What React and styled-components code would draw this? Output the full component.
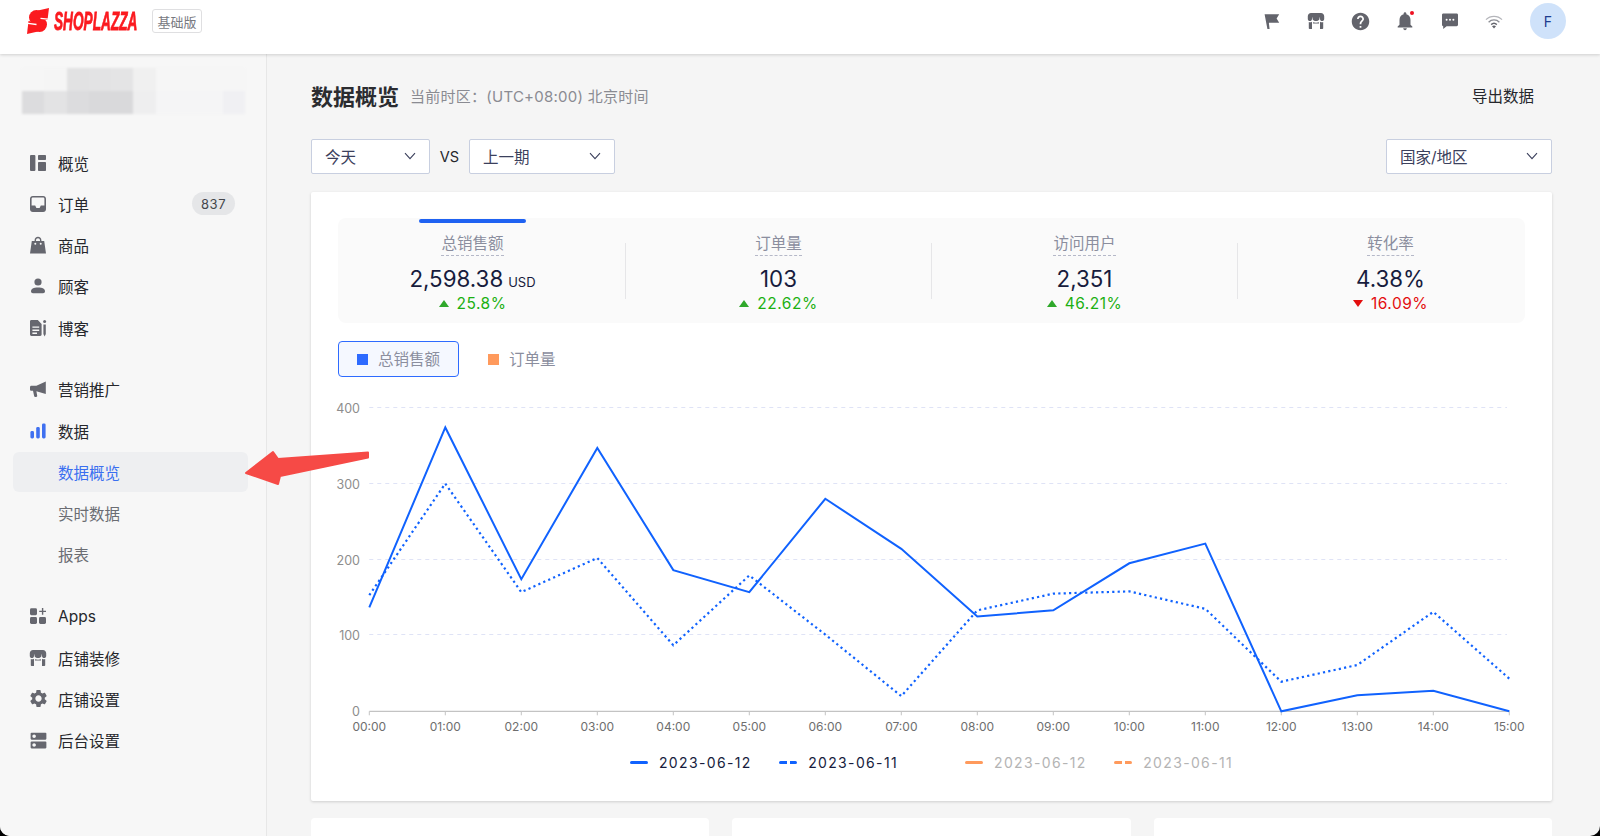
import React from 'react'
import styled, { createGlobalStyle } from 'styled-components'
import { MdSettings, MdHelp, MdNotifications, MdDns } from 'react-icons/md'

const GlobalStyle = createGlobalStyle`
  html, body {
    margin: 0;
    padding: 0;
    background: #000;
    overflow: hidden;
  }
  body, button {
    font-family: Inter, "Noto Sans CJK SC", sans-serif;
  }
  * { box-sizing: border-box; }
`
const Shell = styled.div`
  position: relative;
  width: 1600px;
  height: 836px;
  display: flex;
  flex-direction: column;
  background: #f5f5f5;
  border-radius: 0 0 10px 10px;
  overflow: hidden;
`
const Header = styled.header`
  height: 54px;
  flex: none;
  display: flex;
  align-items: center;
  padding: 0 34px 12px 27px;
  background: #fff;
  box-shadow: 0 1px 3px rgba(0, 0, 0, 0.16);
  position: relative;
  z-index: 2;
`
const Brand = styled.div`
  display: flex;
  align-items: center;
`
const BrandName = styled.span`
  display: block;
  width: 84px;
  margin-left: 5px;
  font-family: "Liberation Sans", sans-serif;
  font-size: 26px;
  line-height: 26px;
  font-weight: 700;
  font-style: italic;
  color: #fb1a1f;
  white-space: nowrap;
  -webkit-text-stroke: 0.8px #fb1a1f;
  transform: scaleX(0.525);
  transform-origin: left center;
`
const PlanTag = styled.span`
  width: 50px;
  height: 24px;
  margin-left: 14px;
  display: flex;
  align-items: center;
  justify-content: center;
  border: 1px solid #dfdfe1;
  border-radius: 3px;
  font-size: 13px;
  color: #77797f;
`
const HeaderTools = styled.div`
  margin-left: auto;
  display: flex;
  align-items: center;
  gap: 26.4px;
`
const ToolIcon = styled.span`
  position: relative;
  width: 18px;
  height: 18px;
  display: flex;
  color: #63646c;
`
const RedDot = styled.i`
  position: absolute;
  top: -1px;
  right: 0;
  width: 4px;
  height: 4px;
  border-radius: 50%;
  background: #ee1122;
`
const Avatar = styled.span`
  width: 36px;
  height: 36px;
  margin-left: 0.6px;
  display: flex;
  align-items: center;
  justify-content: center;
  border-radius: 50%;
  background: #cfe2fa;
  color: #1d3c8f;
  font-size: 14px;
`
const Body = styled.div`
  flex: 1;
  min-height: 0;
  display: flex;
`
const Sidebar = styled.aside`
  width: 267px;
  flex: none;
  padding-top: 14px;
  background: #f7f7f7;
  border-right: 1px solid #e7e7e7;
`
const Mosaic = styled.div`
  margin: 0 0 28px 22px;
  width: 223px;
  height: 46px;
  display: grid;
  grid-template-columns: repeat(10, 1fr);
  grid-template-rows: repeat(2, 1fr);
  filter: blur(1px);
`
const MosaicCell = styled.div`
  background: ${p => p.$c};
`
const NavGroup = styled.nav`
  display: flex;
  flex-direction: column;
  margin-bottom: 20.6px;
`
const NavItem = styled.div`
  height: 41.25px;
  display: flex;
  align-items: center;
  padding-left: 29px;
  font-size: 15.5px;
  color: #26272c;
`
const NavIcon = styled.span`
  width: 18px;
  height: 18px;
  margin-right: 11px;
  display: flex;
  color: ${p => (p.$active ? '#3f70f0' : '#66676f')};
`
const Count = styled.span`
  width: 43px;
  height: 23px;
  margin-left: auto;
  margin-right: 31px;
  display: flex;
  align-items: center;
  justify-content: center;
  border-radius: 12px;
  background: #e5e6e8;
  font-size: 13px;
  letter-spacing: 0.6px;
  color: #44464c;
`
const SubItem = styled.div`
  height: 39.25px;
  margin: 1px 18px 1px 13px;
  padding-left: 45px;
  display: flex;
  align-items: center;
  border-radius: 6px;
  font-size: 15.5px;
  color: ${p => (p.$active ? '#3a6ff0' : '#6b6d73')};
  background: ${p => (p.$active ? '#eeeff1' : 'transparent')};
`
const Main = styled.main`
  flex: 1;
  min-width: 0;
  padding: 21px 48px 0 44px;
`
const TitleRow = styled.div`
  height: 40px;
  display: flex;
  align-items: center;
`
const Title = styled.h1`
  margin: 0;
  font-size: 22px;
  font-weight: 700;
  color: #2b2c30;
`
const TimeZone = styled.span`
  margin-left: 11px;
  font-size: 15px;
  letter-spacing: 0.25px;
  color: #8a8b92;
`
const ExportLink = styled.a`
  margin-left: auto;
  margin-right: 18px;
  font-size: 15.5px;
  color: #26272c;
`
const Controls = styled.div`
  margin-top: 24px;
  display: flex;
  align-items: center;
`
const Select = styled.div`
  width: ${p => p.$w}px;
  height: 35px;
  padding: 0 13px 2px;
  display: flex;
  align-items: center;
  justify-content: space-between;
  background: #fff;
  border: 1px solid #c8cfe0;
  border-radius: 2px;
  font-size: 15.5px;
  color: #3b405c;
  margin-left: ${p => (p.$right ? 'auto' : '0')};
`
const Versus = styled.span`
  width: 39px;
  text-align: center;
  font-size: 14.5px;
  color: #26272c;
`
const Panel = styled.section`
  margin-top: 18px;
  height: 609px;
  padding: 26px 27px 0;
  background: #fff;
  border-radius: 2px;
  box-shadow: 0 1px 3px rgba(0, 0, 0, 0.16);
`
const Metrics = styled.div`
  height: 105px;
  background: #fafafa;
  border-radius: 8px;
`
const MetricGrid = styled.div`
  margin: 0 -18.5px;
  display: grid;
  grid-template-columns: repeat(4, 1fr);
`
const Metric = styled.div`
  position: relative;
  height: 105px;
  padding-top: 15px;
  text-align: center;

  &:not(:last-child)::after {
    content: '';
    position: absolute;
    right: 0;
    top: 25px;
    height: 56px;
    width: 1px;
    background: #e6e6e8;
  }
`
const ActiveBar = styled.i`
  position: absolute;
  top: 1px;
  left: 50%;
  width: 107px;
  height: 4px;
  margin-left: -54px;
  border-radius: 3px;
  background: #1f62f2;
`
const MetricLabel = styled.span`
  display: inline-block;
  height: 22px;
  line-height: 20px;
  font-size: 15.5px;
  color: #8b8e9e;
  border-bottom: 1px dashed #b5b8c8;
`
const MetricValue = styled.div`
  margin-top: 9px;
  height: 28px;
  line-height: 28px;
  font-size: 22.3px;
  color: #171c3d;
`
const Unit = styled.small`
  margin-left: 5px;
  font-size: 13px;
  color: #171c3d;
`
const Delta = styled.div`
  height: 20px;
  display: flex;
  align-items: center;
  justify-content: center;
  gap: 8px;
  font-size: 15.5px;
  letter-spacing: 0.5px;
  color: ${p => (p.$down ? '#e30d0d' : '#1cb012')};
`
const Arrow = styled.i`
  width: 0;
  height: 0;
  border-left: 5.5px solid transparent;
  border-right: 5.5px solid transparent;
  border-bottom: ${p => (p.$down ? '0' : '7px solid #2fa82a')};
  border-top: ${p => (p.$down ? '7px solid #e30d0d' : '0')};
`
const SeriesToggles = styled.div`
  margin-top: 18px;
  display: flex;
`
const SeriesToggle = styled.div`
  height: 36px;
  width: ${p => (p.$on ? '121px' : '106px')};
  margin-left: ${p => (p.$on ? '0' : '10px')};
  padding: 0 0 3px 18px;
  display: flex;
  align-items: center;
  gap: 10px;
  font-size: 15.5px;
  color: #8b8e9e;
  border-radius: 4px;
  border: 1px solid ${p => (p.$on ? '#2e6bff' : 'transparent')};
  background: ${p => (p.$on ? '#f5f8ff' : 'transparent')};
`
const SeriesDot = styled.i`
  width: 11px;
  height: 11px;
  margin-top: 3px;
  background: ${p => p.$c};
`
const ChartFrame = styled.svg`
  display: block;
  margin: 13px -27px 0;
  width: 1241px;
  height: 360px;
`
const Legend = styled.div`
  height: 24px;
  display: flex;
  justify-content: center;
  gap: 67px;
`
const LegendGroup = styled.div`
  display: flex;
  gap: 27.5px;
`
const LegendItem = styled.div`
  display: flex;
  align-items: center;
  gap: 11px;
  font-size: 14px;
  letter-spacing: 1.35px;
  color: ${p => (p.$off ? '#b4b4b4' : '#171c3d')};
`
const LegendLine = styled.i`
  width: 18px;
  height: 3px;
  border-radius: 2px;
  background: ${p =>
    p.$dashed
      ? `linear-gradient(90deg, ${p.$c} 0 8px, transparent 8px 11px, ${p.$c} 11px 18px)`
      : p.$c};
`
const BottomCards = styled.div`
  margin-top: 17px;
  display: grid;
  grid-template-columns: repeat(3, 1fr);
  gap: 23px;
`
const BottomCard = styled.div`
  height: 60px;
  background: #fff;
  border-radius: 4px;
`
const PointerArrow = styled.svg`
  position: absolute;
  left: 240px;
  top: 445px;
  width: 135px;
  height: 46px;
  z-index: 3;
`

const Chevron = () => (
  <svg width="12" height="8" viewBox="0 0 12 8" fill="none" stroke="#3b405c" strokeWidth="1.1">
    <path d="M1 1.2l5 5.4 5-5.4" />
  </svg>
)

// icons are drawn on an 18px box
const Svg = ({ children }) => (
  <svg width="18" height="18" viewBox="0 0 18 18" fill="currentColor">{children}</svg>
)
const FlagIcon = () => (
  <Svg>
    <path d="M1.6 2.2h14.6l-2.6 4.400 2.600 4.200H6l-.1.400.7 5.800H4.400L1.600 2.200z" />
  </Svg>
)
const StoreIcon = () => (
  <Svg>
    <path d="M4 1h10c1.800 0 3.200 1.400 3.200 3.200v2.800c0 1.200-.9 2.100-2.100 2.100s-2.100-.9-2.100-2.100V5.400h-.5V7c0 1.200-2.200 2.100-3.500 2.100S5.500 8.200 5.500 7V5.400H5V7c0 1.200-.9 2.100-2.100 2.100S.8 8.200.8 7V4.200C.8 2.400 2.200 1 4 1z" />
    <path d="M1.800 10.100c1.100.4 2.300.2 3.200-.4V17H2.600c-.5 0-.8-.4-.8-.8v-6.100zM16.200 10.100v6.100c0 .4-.3.800-.8.800H13V9.700c.9.600 2.100.8 3.200.4zM6 10.200c1.900.6 4.100.6 6 0v1.200H6v-1.200z" />
  </Svg>
)
const ChatIcon = () => (
  <Svg>
    <path d="M2.400 1.400h13.200c.8 0 1.400.6 1.400 1.400v10c0 .8-.6 1.400-1.400 1.400H5.600L2.200 17v-2.800c-.7-.1-1.200-.7-1.200-1.400v-10c0-.8.6-1.400 1.400-1.400z" />
    <circle cx="5.600" cy="7.800" r="1" fill="#fff" />
    <circle cx="9" cy="7.800" r="1" fill="#fff" />
    <circle cx="12.400" cy="7.800" r="1" fill="#fff" />
  </Svg>
)
const WifiIcon = () => (
  <svg width="18" height="18" viewBox="0 0 18 18" fill="none">
    <path d="M1 7.600c4.400-4.400 11.600-4.400 16 0" stroke="#b4b5ba" strokeWidth="1.3" />
    <path d="M3.600 10.200c3-3 7.800-3 10.800 0" stroke="#8c8d94" strokeWidth="1.3" />
    <path d="M6.200 12.600c1.600-1.500 4-1.500 5.600 0" stroke="#63646c" strokeWidth="1.5" />
    <path d="M9 16.400l-2-2.200c1.100-.8 2.900-.8 4 0l-2 2.200z" fill="#63646c" />
  </svg>
)
const OverviewIcon = () => (
  <Svg>
    <rect x="1" y="1" width="5.400" height="16" rx="1" />
    <rect x="9" y="1" width="8" height="5" rx="0.8" />
    <rect x="9" y="8" width="8" height="9" rx="0.8" />
  </Svg>
)
const InboxIcon = () => (
  <Svg>
    <path fillRule="evenodd" d="M3.800 1h10.400C15.800 1 17 2.200 17 3.800v10.400c0 1.600-1.200 2.800-2.800 2.800H3.800C2.200 17 1 15.800 1 14.200V3.800C1 2.200 2.200 1 3.800 1zM3.800 2.600c-.6 0-1.200.6-1.200 1.200v6.800h3.600L7.400 13h3.200l1.200-2.400h3.600V3.800c0-.6-.6-1.200-1.200-1.200H3.800z" />
  </Svg>
)
const BagIcon = () => (
  <Svg>
    <path fillRule="evenodd" d="M5.600 5V4.200C5.600 2.300 7.100.8 9 .8s3.400 1.500 3.400 3.400V5h2.800L17 17.400H1L2.800 5h2.800zm1.400 0h4v-.8c0-1.100-.9-2-2-2s-2 .9-2 2V5zM6.300 8.800a1 1 0 100-2 1 1 0 000 2zm5.400 0a1 1 0 100-2 1 1 0 000 2z" />
  </Svg>
)
const PersonIcon = () => (
  <Svg>
    <circle cx="9" cy="5" r="3.600" />
    <path d="M2 14.200c0-2.400 2.400-3.800 7-3.800s7 1.400 7 3.800c0 1.200-.8 2-2 2H4c-1.200 0-2-.8-2-2z" />
  </Svg>
)
const BlogIcon = () => (
  <Svg>
    <path fillRule="evenodd" d="M2.400 1h6.400L12.600 5v10.600c0 .8-.6 1.400-1.400 1.400H2.400c-.8 0-1.400-.6-1.400-1.400V2.400C1 1.600 1.600 1 2.400 1zM3.400 7.400v1.400h6.800V7.400H3.400zm0 3.200V12h6.800v-1.400H3.400zm0 3v1.400h4.600v-1.400H3.400z" />
    <circle cx="15.600" cy="2.600" r="1.500" />
    <path d="M14.400 5.400h2.400V15l-1.200 2.600L14.400 15V5.400z" />
  </Svg>
)
const MegaphoneIcon = () => (
  <Svg>
    <path d="M16.800 1.400v12.600L7.400 11.200l.8 4.600c.1.700-.3 1.200-1 1.200H6.200c-.5 0-.9-.3-1-.8L4 10.800H2.400c-.8 0-1.400-.6-1.400-1.400V7.200c0-.8.6-1.400 1.400-1.400h5l9.400-4.400z" />
  </Svg>
)
const BarsIcon = () => (
  <Svg>
    <rect x="1.400" y="9" width="3.600" height="7.400" rx="1.400" />
    <rect x="7.200" y="5" width="3.600" height="11.400" rx="1.400" />
    <rect x="13" y="1.400" width="3.600" height="15" rx="1.400" />
  </Svg>
)
const AppsIcon = () => (
  <Svg>
    <rect x="1" y="1.200" width="7" height="7" rx="1.400" />
    <rect x="1" y="10" width="7" height="7" rx="1.400" />
    <rect x="10" y="10" width="7" height="7" rx="1.400" />
    <path d="M12.900 1h1.400v2.700H17v1.400h-2.700v2.700h-1.400V5.100h-2.700V3.700h2.700V1z" />
  </Svg>
)

const mosaic = [
  '#f6f6f6', '#f5f5f5', '#e2e2e3', '#e3e3e4', '#e4e4e5', '#f0f0f0', '#f6f6f6', '#f6f6f6', '#f6f6f6', '#f6f6f6',
  '#dcdcde', '#e3e3e4', '#dcdcde', '#d9d9db', '#d9d9db', '#eeeeef', '#f5f5f6', '#f5f5f6', '#f5f5f6', '#f0f0f3',
]

const metrics = [
  { label: '总销售额', value: '2,598.38', unit: 'USD', delta: '25.8%', active: true },
  { label: '订单量', value: '103', delta: '22.62%' },
  { label: '访问用户', value: '2,351', delta: '46.21%' },
  { label: '转化率', value: '4.38%', delta: '16.09%', down: true },
]

// chart coordinates are relative to the svg, which sits at 311,390 on the page
const X0 = 58.3
const STEP = 76
const BASE = 321.3
const SCALE = 75.9 / 100
const hours = Array.from({ length: 16 }, (_, i) => `${String(i).padStart(2, '0')}:00`)
const current = [137, 374, 174, 347, 186, 157, 280, 214, 125, 133, 195, 221, 0, 21, 27, 0]
const previous = [153, 300, 157, 202, 87, 179, 101, 20, 133, 155, 158, 135, 39, 61, 131, 43]
const toPoints = list => list.map((v, i) => `${X0 + i * STEP},${BASE - v * SCALE}`).join(' ')

const Chart = () => (
  <ChartFrame viewBox="0 0 1241 360">
    {[100, 200, 300, 400].map(v => (
      <line key={v} x1={X0} x2={1196} y1={Math.round(BASE - v * SCALE) - 0.5} y2={Math.round(BASE - v * SCALE) - 0.5}
        stroke="#dfe3f6" strokeDasharray="4 4" />
    ))}
    {[0, 100, 200, 300, 400].map(v => (
      <text key={v} x={49} y={BASE - v * SCALE + 5} textAnchor="end" fontSize="12.5" fill="#8d8d8d">{v}</text>
    ))}
    <line x1={X0} x2={X0 + 15 * STEP} y1={BASE} y2={BASE} stroke="#b4b4b4" />
    {hours.map((h, i) => (
      <g key={h}>
        <line x1={X0 + i * STEP} x2={X0 + i * STEP} y1={BASE} y2={BASE + 4} stroke="#c4c4c4" />
        <text x={X0 + i * STEP} y={BASE + 20} textAnchor="middle" fontSize="12" fill="#6e6e6e">{h}</text>
      </g>
    ))}
    <polyline points={toPoints(previous)} fill="none" stroke="#1062fe" strokeWidth="2.2" strokeDasharray="2.2 3.2" />
    <polyline points={toPoints(current)} fill="none" stroke="#1062fe" strokeWidth="2" />
  </ChartFrame>
)

const NavRow = ({ icon, label, active, count }) => (
  <NavItem>
    <NavIcon $active={active}>{icon}</NavIcon>
    {label}
    {count && <Count>{count}</Count>}
  </NavItem>
)

const App = () => (
  <Shell>
    <GlobalStyle />
    <Header>
      <Brand>
        <svg width="22" height="26" viewBox="0 0 22 26">
          <g fill="#fb1a1f">
            <circle cx="9.500" cy="9.500" r="7.500" />
            <circle cx="12.500" cy="16.500" r="7.500" />
            <polygon points="11,2.500 22,0 20.500,12 15,12" />
            <polygon points="1.500,13 0,26 11,23.500 7,14" />
          </g>
          <path d="M13.500 10.300L21 11.200M1 15.300l8.500 1.200" stroke="#fff" strokeWidth="1.300" fill="none" />
        </svg>
        <BrandName>SHOPLAZZA</BrandName>
        <PlanTag>基础版</PlanTag>
      </Brand>
      <HeaderTools>
        <ToolIcon><FlagIcon /></ToolIcon>
        <ToolIcon><StoreIcon /></ToolIcon>
        <ToolIcon><MdHelp size={21} style={{ margin: '-1.5px' }} /></ToolIcon>
        <ToolIcon><MdNotifications size={22} style={{ margin: '-2px' }} /><RedDot /></ToolIcon>
        <ToolIcon><ChatIcon /></ToolIcon>
        <ToolIcon><WifiIcon /></ToolIcon>
        <Avatar>F</Avatar>
      </HeaderTools>
    </Header>
    <Body>
      <Sidebar>
        <Mosaic>
          {mosaic.map((c, i) => <MosaicCell key={i} $c={c} />)}
        </Mosaic>
        <NavGroup>
          <NavRow icon={<OverviewIcon />} label="概览" />
          <NavRow icon={<InboxIcon />} label="订单" count="837" />
          <NavRow icon={<BagIcon />} label="商品" />
          <NavRow icon={<PersonIcon />} label="顾客" />
          <NavRow icon={<BlogIcon />} label="博客" />
        </NavGroup>
        <NavGroup>
          <NavRow icon={<MegaphoneIcon />} label="营销推广" />
          <NavRow icon={<BarsIcon />} label="数据" active />
          <SubItem $active>数据概览</SubItem>
          <SubItem>实时数据</SubItem>
          <SubItem>报表</SubItem>
        </NavGroup>
        <NavGroup>
          <NavRow icon={<AppsIcon />} label="Apps" />
          <NavRow icon={<StoreIcon />} label="店铺装修" />
          <NavRow icon={<MdSettings size={21} style={{ margin: '-1.5px' }} />} label="店铺设置" />
          <NavRow icon={<MdDns size={21} style={{ margin: '-1.5px' }} />} label="后台设置" />
        </NavGroup>
      </Sidebar>
      <Main>
        <TitleRow>
          <Title>数据概览</Title>
          <TimeZone>当前时区：(UTC+08:00) 北京时间</TimeZone>
          <ExportLink>导出数据</ExportLink>
        </TitleRow>
        <Controls>
          <Select $w={119}>今天<Chevron /></Select>
          <Versus>VS</Versus>
          <Select $w={146}>上一期<Chevron /></Select>
          <Select $w={166} $right>国家/地区<Chevron /></Select>
        </Controls>
        <Panel>
          <Metrics>
            <MetricGrid>
              {metrics.map(m => (
                <Metric key={m.label}>
                  {m.active && <ActiveBar />}
                  <MetricLabel>{m.label}</MetricLabel>
                  <MetricValue>{m.value}{m.unit && <Unit>{m.unit}</Unit>}</MetricValue>
                  <Delta $down={m.down}><Arrow $down={m.down} />{m.delta}</Delta>
                </Metric>
              ))}
            </MetricGrid>
          </Metrics>
          <SeriesToggles>
            <SeriesToggle $on><SeriesDot $c="#2e6bff" />总销售额</SeriesToggle>
            <SeriesToggle><SeriesDot $c="#ff9a5c" />订单量</SeriesToggle>
          </SeriesToggles>
          <Chart />
          <Legend>
            <LegendGroup>
              <LegendItem><LegendLine $c="#1062fe" />2023-06-12</LegendItem>
              <LegendItem><LegendLine $c="#1062fe" $dashed />2023-06-11</LegendItem>
            </LegendGroup>
            <LegendGroup>
              <LegendItem $off><LegendLine $c="#ff9a5c" />2023-06-12</LegendItem>
              <LegendItem $off><LegendLine $c="#ff9a5c" $dashed />2023-06-11</LegendItem>
            </LegendGroup>
          </Legend>
        </Panel>
        <BottomCards>
          <BottomCard />
          <BottomCard />
          <BottomCard />
        </BottomCards>
      </Main>
    </Body>
    <PointerArrow viewBox="0 0 135 46">
      <polygon points="6,28 33,7 38,14 128,7.500 128,12.500 40,31 38,39"
        fill="#f64a46" stroke="#f64a46" strokeWidth="2" strokeLinejoin="round" />
    </PointerArrow>
  </Shell>
)

export default App
